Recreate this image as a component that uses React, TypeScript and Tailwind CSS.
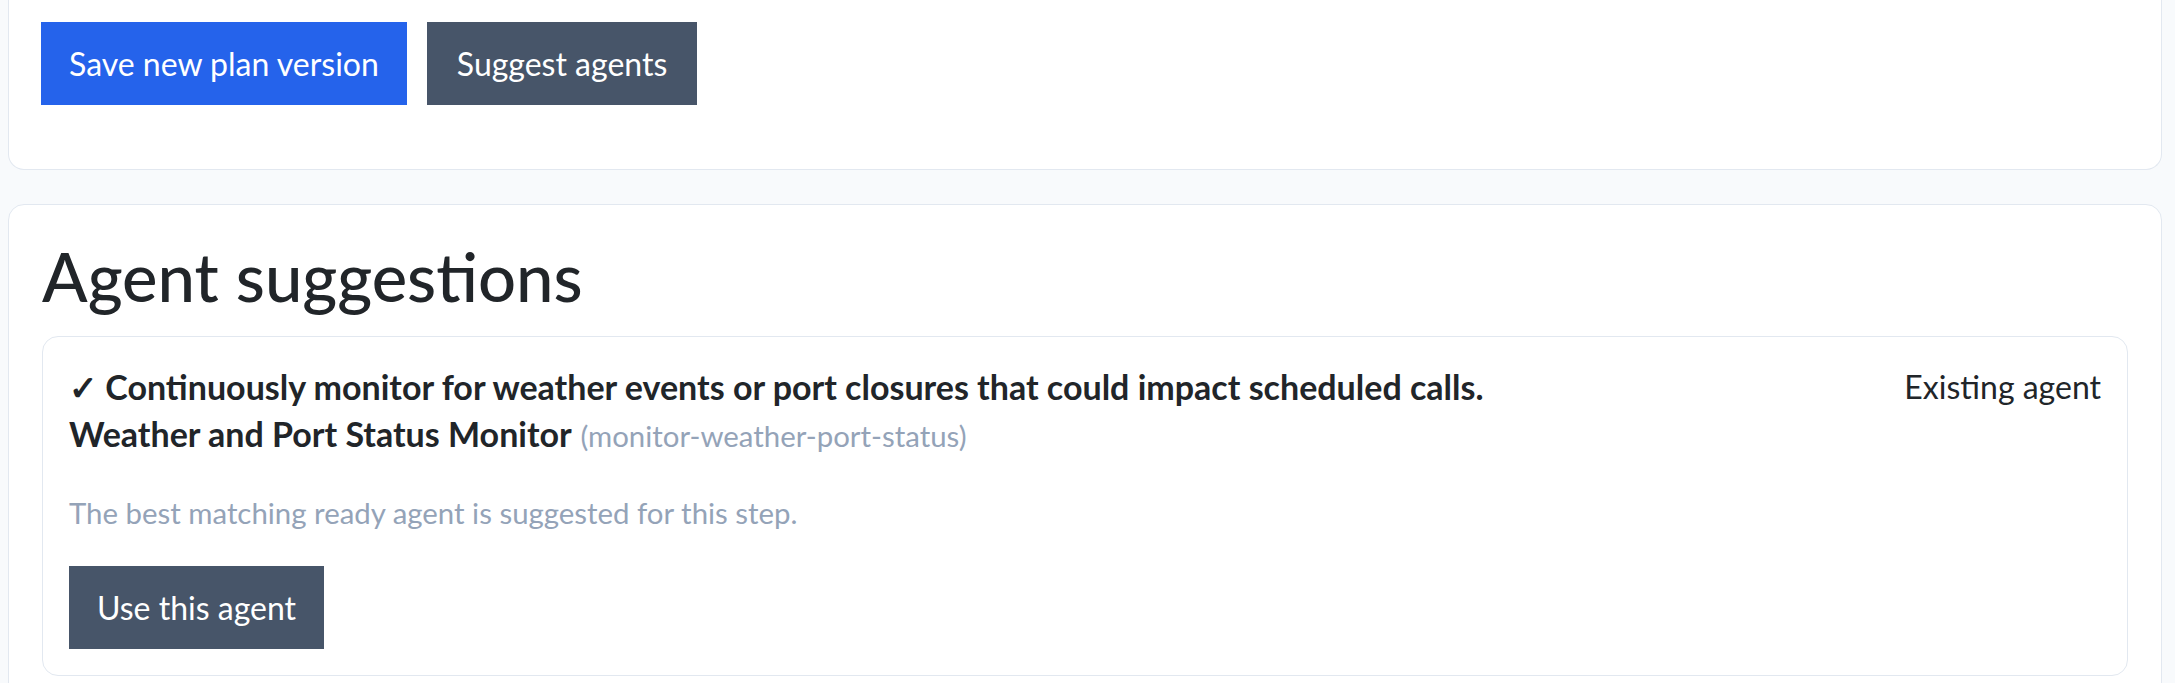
import React from 'react';

const btn = 'h-[83px] px-[28px] text-[32px] leading-[47px] text-white';

function AgentSuggestion() {
  return (
    <div className="rounded-2xl border border-[#e2e8f0] bg-white px-[26px] pt-[26px] pb-[26px]">
      <div className="flex items-start justify-between">
        <div>
          <div className="text-[34px] leading-[47px] font-bold text-[#212529]">
            ✓ Continuously monitor for weather events or port closures that could impact scheduled calls.
          </div>
          <div className="text-[34px] leading-[47px]">
            <span className="font-bold text-[#212529]">Weather and Port Status Monitor</span>{' '}
            <span className="text-[29.4px] leading-none text-[#94a3b8]">(monitor-weather-port-status)</span>
          </div>
        </div>
        <div className="text-[32px] leading-[47px] text-[#212529]">Existing agent</div>
      </div>
      <p className="mt-[32px] text-[29.4px] leading-[47px] text-[#94a3b8]">
        The best matching ready agent is suggested for this step.
      </p>
      <button className={`mt-[30px] bg-[#475569] ${btn}`}>Use this agent</button>
    </div>
  );
}

export default function App() {
  return (
    <div className="min-h-screen bg-[#f8fafc] pl-[8px] pr-[13px] font-[Lato,sans-serif] text-[#212529]">
      <div className="rounded-b-2xl border border-t-0 border-[#e2e8f0] bg-white px-[32px] pt-[22px] pb-[64px]">
        <div className="flex gap-[20px]">
          <button className={`bg-[#2563eb] ${btn}`}>Save new plan version</button>
          <button className={`bg-[#475569] ${btn} px-[30px]`}>Suggest agents</button>
        </div>
      </div>

      <div className="mt-[34px] rounded-2xl border border-[#e2e8f0] bg-white px-[33px] pt-[31px] pb-[40px]">
        <h1 className="mb-[20px] text-[67px] leading-[80px] font-medium text-[#212529]">Agent suggestions</h1>
        <AgentSuggestion />
      </div>
    </div>
  );
}
